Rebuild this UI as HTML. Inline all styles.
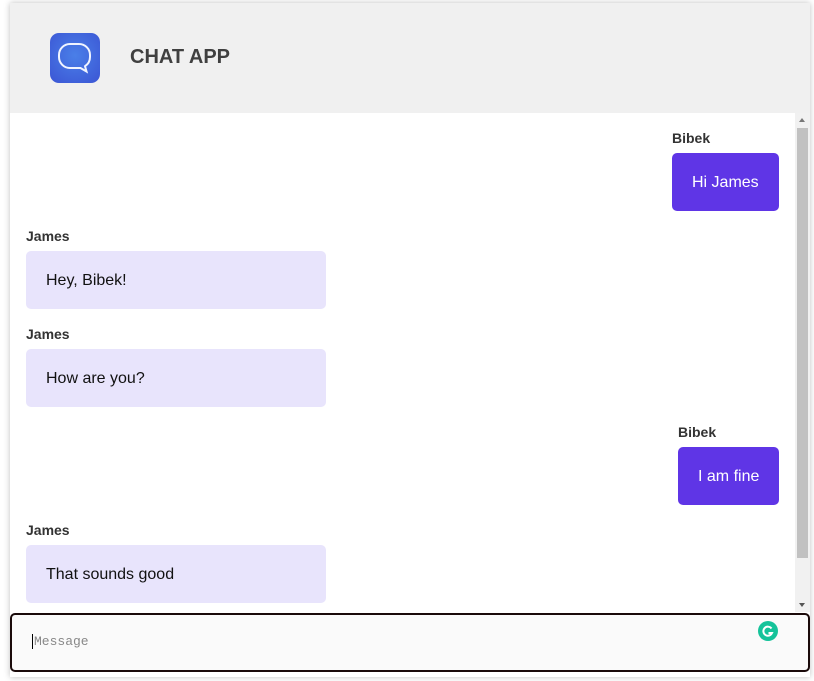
<!DOCTYPE html>
<html><head><style>
body{margin:0;background:#fff;font-family:"Liberation Sans",Arial,sans-serif;width:814px;height:681px;overflow:hidden;position:relative}
.app{position:absolute;left:10px;top:3px;width:800px;height:674px;box-shadow:0 0 6px rgba(0,0,0,.25);background:#fff}
.hdr{position:absolute;left:0;top:0;width:800px;height:110px;background:#f0f0f0}
.logo{position:absolute;left:40px;top:30px;width:50px;height:50px;border-radius:9px;background:radial-gradient(circle at 50% 45%,#4a7fe8,#3b55d4)}
.title{position:absolute;left:120px;top:43px;font-size:20px;font-weight:bold;color:#404040}
.chat{position:absolute;left:0;top:110px;width:785px;height:499px;overflow:hidden}
.sb{position:absolute;left:785px;top:110px;width:15px;height:499px;background:#f1f1f1}
.thumb{position:absolute;left:2px;top:15px;width:11px;height:430px;background:#c1c1c1}
.name{position:absolute;font-size:14px;font-weight:bold;color:#333}
.b{position:absolute;height:58px;line-height:60px;font-size:16px;border-radius:5px;padding:0 20px;box-sizing:border-box;white-space:nowrap}
.me{background:#5f35e6;color:#fff;right:16px}
.them{background:#e8e4fc;color:#111;left:16px;width:300px}
.ta{position:absolute;left:10px;top:613px;width:800px;height:59px;box-sizing:border-box;border:2px solid #1a0a0a;border-radius:5px;background:#fafafa}
.ph{position:absolute;left:20px;top:19px;font-family:"Liberation Mono",monospace;font-size:13px;color:#888;border-left:1px solid #000;padding-left:1px}
.g{position:absolute;left:746px;top:6px;width:20px;height:20px;border-radius:50%;background:#15c39a}
</style></head><body>
<div class="app">
<div class="hdr"><div class="logo"><svg width="50" height="50" viewBox="0 0 50 50"><path d="M20 11h9a11 11 0 0 1 11 11v2a11 11 0 0 1-5 9.2l1.5 5.3-6-3.5H20a11 11 0 0 1-11-11v-2a11 11 0 0 1 11-11z" fill="none" stroke="#f0f4ff" stroke-width="2"/></svg></div><div class="title">CHAT APP</div></div>
<div class="chat">
<div class="name" style="left:662px;top:17px">Bibek</div>
<div class="b me" style="top:40px;width:107px">Hi James</div>
<div class="name" style="left:16px;top:115px">James</div>
<div class="b them" style="top:138px">Hey, Bibek!</div>
<div class="name" style="left:16px;top:213px">James</div>
<div class="b them" style="top:236px">How are you?</div>
<div class="name" style="left:668px;top:311px">Bibek</div>
<div class="b me" style="top:334px;width:101px">I am fine</div>
<div class="name" style="left:16px;top:409px">James</div>
<div class="b them" style="top:432px">That sounds good</div>
</div>
<div class="sb"><div style="position:absolute;left:4px;top:5px;border:3.5px solid transparent;border-bottom:4px solid #777;border-top:0"></div><div class="thumb"></div><div style="position:absolute;left:4px;top:490px;border:3.5px solid transparent;border-top:4px solid #555;border-bottom:0"></div></div>
</div>
<div class="ta"><div class="ph">Message</div><div class="g"><svg width="20" height="20" viewBox="0 0 20 20"><path d="M13.5 7.5A4.5 4.5 0 1 0 14 12h-3.5" fill="none" stroke="#fff" stroke-width="2"/></svg></div></div>
</body></html>
